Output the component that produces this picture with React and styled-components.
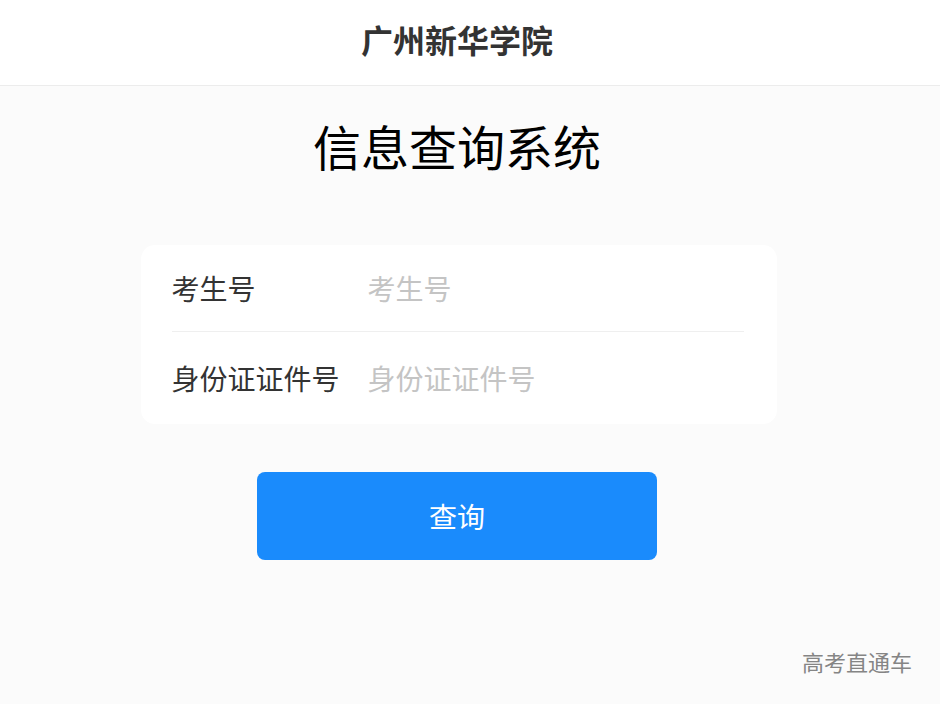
import React from "react";
import styled, { createGlobalStyle } from "styled-components";

const Global = createGlobalStyle`
  html, body { margin: 0; padding: 0; background: #fbfbfb; }
  body { font-family: "Noto Sans CJK SC", "Noto Sans", sans-serif; }
  * { box-sizing: border-box; }
`;

const Page = styled.div`
  min-height: 704px;
  display: flex;
  flex-direction: column;
  background: #fbfbfb;
`;

const Header = styled.header`
  height: 86px;
  background: #fff;
  border-bottom: 1px solid #ececec;
  display: flex;
  align-items: center;
  justify-content: center;
  padding: 0 26px 8px 0;
`;

const HeaderTitle = styled.h1`
  margin: 0;
  font-size: 32px;
  font-weight: 700;
  color: #333;
  line-height: 1;
`;

const Main = styled.main`
  display: flex;
  flex-direction: column;
  align-items: center;
  padding-right: 26px;
`;

const Title = styled.h2`
  margin: 35px 0 0;
  font-size: 48px;
  font-weight: 400;
  line-height: 48px;
  color: #000;
`;

const Card = styled.div`
  margin-top: 76px;
  margin-left: 3px;
  width: 636px;
  background: #fff;
  border-radius: 14px;
  padding: 0 33px 0 31px;
`;

const Row = styled.label`
  display: flex;
  align-items: center;
  height: ${(p) => p.$h}px;
  border-bottom: ${(p) => (p.$divider ? "1px solid #efefef" : "none")};
`;

const Label = styled.span`
  width: 196px;
  flex: none;
  font-size: 28px;
  color: #333;
  white-space: nowrap;
`;

const Input = styled.input`
  flex: 1;
  min-width: 0;
  border: none;
  outline: none;
  background: transparent;
  font-family: inherit;
  font-size: 28px;
  color: #333;
  padding: 0;
  &::placeholder { color: #c4c4c4; }
`;

const Button = styled.button`
  margin-top: 48px;
  width: 400px;
  height: 88px;
  border: none;
  border-radius: 8px;
  background: #1a8bfc;
  color: #fff;
  font-family: inherit;
  font-size: 28px;
  cursor: pointer;
`;

const Footer = styled.footer`
  margin-top: 86px;
  display: flex;
  justify-content: flex-end;
  padding-right: 28px;
`;

const FooterLink = styled.a`
  font-size: 22px;
  line-height: 30px;
  color: #858585;
  text-decoration: none;
`;

export default function App() {
  return (
    <Page>
      <Global />
      <Header>
        <HeaderTitle>广州新华学院</HeaderTitle>
      </Header>
      <Main>
        <Title>信息查询系统</Title>
        <Card>
          <Row $h={87} $divider>
            <Label>考生号</Label>
            <Input placeholder="考生号" />
          </Row>
          <Row $h={92}>
            <Label>身份证证件号</Label>
            <Input placeholder="身份证证件号" />
          </Row>
        </Card>
        <Button>查询</Button>
      </Main>
      <Footer>
        <FooterLink href="#">高考直通车</FooterLink>
      </Footer>
    </Page>
  );
}
